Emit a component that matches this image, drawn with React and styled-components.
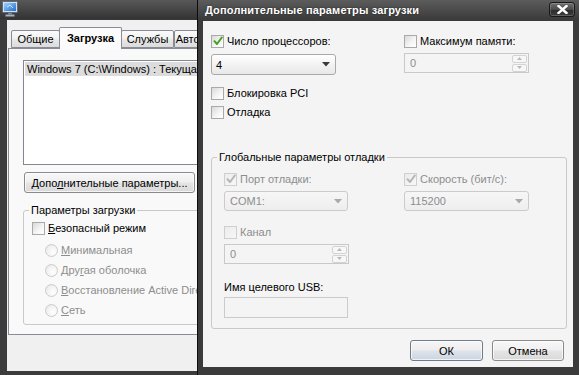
import React from 'react';
import styled, { createGlobalStyle } from 'styled-components';

const FONT = '"Liberation Sans", Arial, sans-serif';

const Global = createGlobalStyle`
  html, body { margin: 0; padding: 0; background: #2b2b2b; }
  body { width: 579px; height: 375px; overflow: hidden; font-family: ${FONT}; font-size: 11px; color: #000; }
  * { box-sizing: border-box; }
`;

const Desktop = styled.div`
  display: flex;
  width: 579px;
  height: 375px;
  overflow: hidden;
`;

/* ---------- back window ---------- */
const BackWindow = styled.div`
  width: 197px;
  flex: none;
  overflow: hidden;
  display: flex;
  flex-direction: column;
  background: linear-gradient(#585858, #333 19px, #3c3c3c 20px, #3c3c3c);
`;

const BackTitle = styled.div`
  height: 20px;
  flex: none;
  padding: 1px 0 0 2px;
`;

const BackClient = styled.div`
  flex: 1;
  width: 320px;
  margin: 0 0 4px 7px;
  background: #f0f0f0;
  padding-left: 1px;
  display: flex;
  flex-direction: column;
`;

const TabStrip = styled.div`
  display: flex;
  align-items: flex-end;
  height: 28px;
  padding-left: 3px;
  position: relative;
  z-index: 2;
`;

const Tab = styled.div`
  width: ${(p) => p.$w}px;
  height: ${(p) => (p.$active ? 22 : 18)}px;
  margin: 0 ${(p) => (p.$active ? -1 : 0)}px ${(p) => (p.$active ? -1 : 0)}px;
  border: 1px solid #898c95;
  border-bottom: ${(p) => (p.$active ? 'none' : '1px solid #898c95')};
  border-radius: 2px 2px 0 0;
  background: ${(p) =>
    p.$active ? '#fbfbfb' : 'linear-gradient(#fafafa, #f0f0f0 50%, #e6e6e6 55%, #dcdcdc)'};
  font-weight: ${(p) => (p.$active ? 'bold' : 'normal')};
  font-size: 11px;
  display: flex;
  align-items: center;
  justify-content: center;
  position: relative;
  z-index: ${(p) => (p.$active ? 2 : 1)};
  padding-bottom: ${(p) => (p.$active ? 2 : 0)}px;
  white-space: nowrap;
`;

const TabPane = styled.div`
  border: 1px solid #898c95;
  background: #f9f9f9;
  padding: 11px 0 9px 14px;
  display: flex;
  flex-direction: column;
  align-items: flex-start;
`;

const ListBox = styled.div`
  width: 260px;
  height: 105px;
  border: 1px solid #828790;
  background: #fff;
  padding: 1px;
`;

const ListItem = styled.div`
  height: 14px;
  line-height: 14px;
  padding-left: 2px;
  background: ${(p) => (p.$selected ? '#dcdcdc' : 'transparent')};
  white-space: nowrap;
`;

const Mn = styled.span`
  text-decoration: underline;
`;

const Button = styled.button`
  font-family: ${FONT};
  font-size: 11px;
  color: #000;
  width: ${(p) => p.$w}px;
  height: 21px;
  margin: ${(p) => p.$m || 0};
  padding: 0;
  border: 1px solid ${(p) => (p.$default ? '#6f7b8b' : '#8a8a8a')};
  border-radius: 3px;
  background: ${(p) =>
    p.$default
      ? 'linear-gradient(#f6f6f6, #eeeeee 45%, #dde3eb 55%, #cbd4e0)'
      : 'linear-gradient(#f8f8f8, #f0f0f0 45%, #e4e4e4 55%, #d9d9d9)'};
  box-shadow: inset 0 0 0 1px rgba(255, 255, 255, 0.7);
  white-space: nowrap;
`;

const GroupBox = styled.fieldset`
  margin: ${(p) => p.$m || 0};
  width: ${(p) => (p.$w ? `${p.$w}px` : 'auto')};
  min-width: 0;
  border: 1px solid #c9c9c9;
  border-radius: 3px;
  padding: ${(p) => p.$pad};
  display: flex;
  flex-direction: column;
`;

const Legend = styled.legend`
  padding: 0 2px;
  margin-left: ${(p) => p.$ml}px;
  line-height: 14px;
  font-size: 11px;
  color: #000;
`;

const Row = styled.div`
  display: flex;
  align-items: center;
  gap: 3px;
  height: 16px;
  margin: ${(p) => p.$m || 0};
  color: ${(p) => (p.$disabled ? '#8d8d8d' : '#000')};
  white-space: nowrap;
`;

const Box = styled.span`
  width: 13px;
  height: 13px;
  flex: none;
  border: 1px solid ${(p) => (p.$disabled ? '#cfcfcf' : '#a9a9a9')};
  background: ${(p) =>
    p.$disabled ? 'linear-gradient(135deg, #ececec, #f7f7f7)' : 'linear-gradient(135deg, #d9d9d9, #f6f6f6 60%, #ffffff)'};
  display: flex;
  align-items: center;
  justify-content: center;
`;

const RadioDot = styled.span`
  width: 13px;
  height: 13px;
  flex: none;
  border-radius: 50%;
  border: 1px solid #cccccc;
  background: radial-gradient(circle at 65% 65%, #ffffff, #f1f1f1 60%, #e2e2e2);
`;

const Check = ({ checked, disabled, children, m }) => (
  <Row $disabled={disabled} $m={m}>
    <Box $disabled={disabled}>
      {checked && (
        <svg width="10" height="10" viewBox="0 0 10 10">
          <path
            d="M1.5 5.2 L4 8 L8.8 1.5"
            fill="none"
            stroke={disabled ? '#b4b4b4' : '#45a11d'}
            strokeWidth="2"
            strokeLinecap="round"
            strokeLinejoin="round"
          />
        </svg>
      )}
    </Box>
    <span>{children}</span>
  </Row>
);

const Radio = ({ children, m }) => (
  <Row $disabled $m={m}>
    <RadioDot />
    <span>{children}</span>
  </Row>
);

/* ---------- dialog ---------- */
const Dialog = styled.div`
  flex: 1;
  display: flex;
  flex-direction: column;
  border-left: 1px solid #0d0d0d;
  background: linear-gradient(#5c5c5c, #3a3a3a 20px, #3b3b3b 21px, #3b3b3b);
`;

const DlgTitle = styled.div`
  height: 21px;
  flex: none;
  display: flex;
  align-items: center;
  justify-content: space-between;
  padding: 0 4px 1px 7px;
`;

const TitleText = styled.span`
  color: #fff;
  font-weight: bold;
  font-size: 11px;
  letter-spacing: 0.15px;
  text-shadow: 0 0 2px rgba(0, 0, 0, 0.6);
  white-space: nowrap;
`;

const CloseBtn = styled.div`
  width: 26px;
  height: 15px;
  border: 1px solid #181818;
  border-radius: 3px;
  background: linear-gradient(#707070, #4a4a4a 50%, #2c2c2c 55%, #3e3e3e);
  box-shadow: inset 0 0 0 1px rgba(255, 255, 255, 0.18);
  display: flex;
  align-items: center;
  justify-content: center;
  margin-bottom: 1px;
`;

const DlgClient = styled.div`
  flex: 1;
  margin: 0 6px 8px 5px;
  background: #f4f4f4;
  padding: 12px 6px 0 8px;
  display: flex;
  flex-direction: column;
`;

const TopGrid = styled.div`
  display: grid;
  grid-template-columns: 193px 1fr;
`;

const InnerGrid = styled.div`
  display: grid;
  grid-template-columns: 180px 1fr;
`;

const Col = styled.div`
  display: flex;
  flex-direction: column;
  align-items: flex-start;
`;

const SelectBox = styled.div`
  width: ${(p) => p.$w}px;
  height: ${(p) => p.$h || 21}px;
  margin: ${(p) => p.$m || 0};
  border: 1px solid ${(p) => (p.$disabled ? '#cbcbcb' : '#a9a9a9')};
  border-radius: 3px;
  background: ${(p) =>
    p.$disabled ? 'linear-gradient(#f6f6f6, #eeeeee)' : 'linear-gradient(#ffffff, #f3f3f3 50%, #e8e8e8)'};
  color: ${(p) => (p.$disabled ? '#8d8d8d' : '#000')};
  display: flex;
  align-items: center;
  justify-content: space-between;
  padding: 0 5px 0 ${(p) => p.$pl || 5}px;
`;

const Arrow = ({ disabled }) => (
  <svg width="8" height="5" viewBox="0 0 8 5">
    <path d="M0 0 H8 L4 4.5 Z" fill={disabled ? '#a9a9a9' : '#3b3b3b'} />
  </svg>
);

const SpinBox = styled.div`
  width: 125px;
  height: 20px;
  margin: ${(p) => p.$m || 0};
  border: 1px solid #c9c9c9;
  background: #f4f4f4;
  color: #8d8d8d;
  display: flex;
  align-items: center;
  padding: 0 1px 0 5px;
`;

const SpinBtns = styled.div`
  margin-left: auto;
  display: flex;
  flex-direction: column;
  gap: 1px;
`;

const SpinBtn = styled.div`
  width: 15px;
  height: 8px;
  border: 1px solid #d3d3d3;
  border-radius: 2px;
  background: #f7f7f7;
  display: flex;
  align-items: center;
  justify-content: center;
`;

const SpinArrow = ({ up }) => (
  <svg width="5" height="3" viewBox="0 0 5 3">
    <path d={up ? 'M0 3 H5 L2.5 0 Z' : 'M0 0 H5 L2.5 3 Z'} fill="#b9b9b9" />
  </svg>
);

const Spin = ({ m }) => (
  <SpinBox $m={m}>
    <span>0</span>
    <SpinBtns>
      <SpinBtn>
        <SpinArrow up />
      </SpinBtn>
      <SpinBtn>
        <SpinArrow />
      </SpinBtn>
    </SpinBtns>
  </SpinBox>
);

const FieldLabel = styled.div`
  height: 14px;
  line-height: 14px;
  margin-top: 16px;
`;

const TextInput = styled.div`
  width: 124px;
  height: 21px;
  margin-top: 3px;
  border: 1px solid #cbcbcb;
  background: #f4f4f4;
`;

const ButtonRow = styled.div`
  display: flex;
  justify-content: flex-end;
  gap: 9px;
  margin: 11px 3px 0 0;
`;

const MonitorIcon = () => (
  <svg width="16" height="16" viewBox="0 0 16 16">
    <defs>
      <linearGradient id="scr" x1="0" y1="0" x2="1" y2="1">
        <stop offset="0" stopColor="#9fd3ff" />
        <stop offset="1" stopColor="#1f6fd0" />
      </linearGradient>
    </defs>
    <rect x="0.5" y="0.5" width="15" height="11" rx="1" fill="#d9dee6" stroke="#5d6b7e" />
    <rect x="2" y="2" width="12" height="8" fill="url(#scr)" />
    <path d="M5 6 L8 4 L11 7" fill="none" stroke="#e8f4ff" strokeWidth="0.8" />
    <rect x="6" y="12" width="4" height="1.5" fill="#7b8593" />
    <rect x="3.5" y="13.5" width="9" height="2" rx="0.5" fill="#a8b0bb" stroke="#66707c" strokeWidth="0.5" />
  </svg>
);

export default function App() {
  return (
    <>
      <Global />
      <Desktop>
        <BackWindow>
          <BackTitle>
            <MonitorIcon />
          </BackTitle>
          <BackClient>
            <TabStrip>
              <Tab $w={49}>Общие</Tab>
              <Tab $w={63} $active>
                Загрузка
              </Tab>
              <Tab $w={53}>Службы</Tab>
              <Tab $w={70}>Автозагрузка</Tab>
            </TabStrip>
            <TabPane>
              <ListBox>
                <ListItem $selected>Windows 7 (C:\Windows) : Текущая ОС; ОС по умолчанию</ListItem>
              </ListBox>
              <Button $w={171} $m="7px 0 0 1px">
                Допо<Mn>л</Mn>нительные параметры...
              </Button>
              <GroupBox $w={280} $m="10px 0 0 0" $pad="3px 0 6px 8px">
                <Legend $ml={-3}>Параметры загрузки</Legend>
                <Check>
                  <Mn>Б</Mn>езопасный режим
                </Check>
                <Radio m="6px 0 0 13px">
                  <Mn>М</Mn>инимальная
                </Radio>
                <Radio m="4px 0 0 13px">
                  Дру<Mn>г</Mn>ая оболочка
                </Radio>
                <Radio m="4px 0 0 13px">
                  <Mn>В</Mn>осстановление Active Directory
                </Radio>
                <Radio m="4px 0 0 13px">
                  <Mn>С</Mn>еть
                </Radio>
              </GroupBox>
            </TabPane>
          </BackClient>
        </BackWindow>

        <Dialog>
          <DlgTitle>
            <TitleText>Дополнительные параметры загрузки</TitleText>
            <CloseBtn>
              <svg width="11" height="9" viewBox="0 0 11 9">
                <path d="M1.5 1 L9.5 8 M9.5 1 L1.5 8" stroke="#fff" strokeWidth="2.4" strokeLinecap="square" />
              </svg>
            </CloseBtn>
          </DlgTitle>
          <DlgClient>
            <TopGrid>
              <Col>
                <Check checked>Число процессоров:</Check>
                <SelectBox $w={125} $m="5px 0 0 0" $pl={4}>
                  <span>4</span>
                  <Arrow />
                </SelectBox>
                <Check m="10px 0 0 0">Блокировка PCI</Check>
                <Check m="3px 0 0 0">Отладка</Check>
              </Col>
              <Col>
                <Check>Максимум памяти:</Check>
                <Spin m="4px 0 0 0" />
              </Col>
            </TopGrid>

            <GroupBox $m="30px 0 0 0" $pad="7px 12px 10px 12px">
              <Legend $ml={-7}>Глобальные параметры отладки</Legend>
              <InnerGrid>
                <Col>
                  <Check checked disabled>
                    Порт отладки:
                  </Check>
                  <SelectBox $w={124} $h={20} $m="4px 0 0 0" $disabled>
                    <span>COM1:</span>
                    <Arrow disabled />
                  </SelectBox>
                  <Check disabled m="13px 0 0 0">
                    Канал
                  </Check>
                  <Spin m="4px 0 0 0" />
                </Col>
                <Col>
                  <Check checked disabled>
                    Скорость (бит/с):
                  </Check>
                  <SelectBox $w={125} $h={20} $m="4px 0 0 0" $disabled>
                    <span>115200</span>
                    <Arrow disabled />
                  </SelectBox>
                </Col>
              </InnerGrid>
              <FieldLabel>Имя целевого USB:</FieldLabel>
              <TextInput />
            </GroupBox>

            <ButtonRow>
              <Button $w={73} $default>
                ОК
              </Button>
              <Button $w={72}>Отмена</Button>
            </ButtonRow>
          </DlgClient>
        </Dialog>
      </Desktop>
    </>
  );
}
